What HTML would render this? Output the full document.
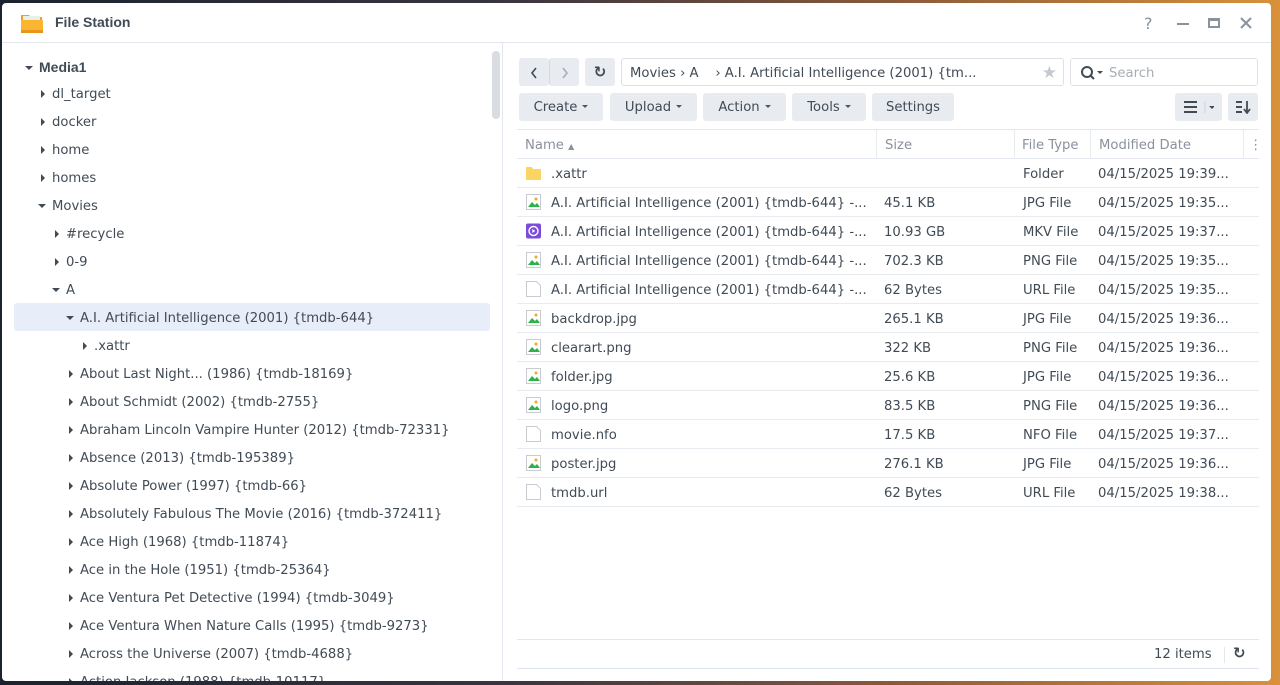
<!DOCTYPE html>
<html><head><meta charset="utf-8"><style>
*{box-sizing:border-box;margin:0;padding:0}
body{width:1280px;height:685px;overflow:hidden;background:linear-gradient(90deg,#1b2230 0%,#3a3540 40%,#8a5a3a 70%,#d9913a 100%);font-family:"DejaVu Sans",sans-serif;font-size:13.2px;color:#414b55;position:relative}
.win{position:absolute;left:2px;top:3px;width:1269px;height:678px;background:#fff;border-radius:4px;overflow:hidden}
.title{position:absolute;left:0;top:0;width:100%;height:40px;border-bottom:1px solid #e3e6ee}
.title b{position:absolute;left:53px;top:11px;font-size:14px;color:#414b55;font-family:"Liberation Sans",sans-serif}
.ab{position:absolute}
.tree{position:absolute;left:1px;top:4px;width:499px;height:674px}
.tree .r{position:absolute;height:28px;line-height:28px;white-space:nowrap}
.tri-r{display:inline-block;width:0;height:0;border-left:4px solid #414b55;border-top:4px solid transparent;border-bottom:4px solid transparent;margin-right:7px;vertical-align:0}
.tri-d{display:inline-block;width:0;height:0;border-top:4px solid #414b55;border-left:4px solid transparent;border-right:4px solid transparent;margin-right:6px;vertical-align:2px}
.btn{position:absolute;background:#e8ecf1;border-radius:3px;height:28px;line-height:28px;text-align:center;color:#414b55}
.car{display:inline-block;border-top:3px solid #555;border-left:3px solid transparent;border-right:3px solid transparent;vertical-align:3px;margin-left:5px}
.row{position:absolute;left:515px;width:742px;height:29px;border-bottom:1px solid #e8ebf0;line-height:31px;white-space:nowrap}
.row span{position:absolute}
.ic{position:absolute;left:9px;top:6px;width:15px;height:16px}
</style></head><body>
<div class="win">
<div class="title">
<svg class="ab" style="left:18px;top:8px" width="24" height="24" viewBox="0 0 24 24"><path d="M1 4h8l2 2h11v15H1z" fill="#f0a020"/><rect x="3" y="5" width="17" height="6" fill="#e8f0e8"/><rect x="1" y="9" width="22" height="13" rx="1" fill="#fbb531"/><rect x="1" y="19" width="22" height="3" fill="#e8951c"/></svg>
<b>File Station</b>
<span class="ab" style="left:1142px;top:11px;font-size:16px;color:#8a929c">?</span>
<div class="ab" style="left:1175px;top:20px;width:12px;height:2px;background:#8a929c"></div>
<div class="ab" style="left:1206px;top:15px;width:12px;height:10px;border:2px solid #8a929c;border-top-width:3px"></div>
<svg class="ab" style="left:1238px;top:14px" width="12" height="12"><path d="M1 1L11 11M11 1L1 11" stroke="#8a929c" stroke-width="2"/></svg>
</div>
<div class="ab" style="left:500px;top:40px;width:1px;height:640px;background:#e3e6ee"></div>
<div class="ab" style="left:490px;top:48px;width:8px;height:68px;background:#d9dce0;border-radius:4px"></div>
<div class="ab" style="left:12px;top:300px;width:476px;height:28px;background:#e7eef9;border-radius:3px"></div>
<div class="tree">
<div class="r" style="left:22px;top:46px"><i class="tri-d"></i><b style="font-family:'Liberation Sans',sans-serif;font-size:14px">Media1</b></div>
<div class="r" style="left:38px;top:74px"><i class="tri-r"></i>dl_target</div>
<div class="r" style="left:38px;top:102px"><i class="tri-r"></i>docker</div>
<div class="r" style="left:38px;top:130px"><i class="tri-r"></i>home</div>
<div class="r" style="left:38px;top:158px"><i class="tri-r"></i>homes</div>
<div class="r" style="left:35px;top:186px"><i class="tri-d"></i>Movies</div>
<div class="r" style="left:52px;top:214px"><i class="tri-r"></i>#recycle</div>
<div class="r" style="left:52px;top:242px"><i class="tri-r"></i>0-9</div>
<div class="r" style="left:49px;top:270px"><i class="tri-d"></i>A</div>
<div class="r" style="left:63px;top:298px"><i class="tri-d"></i>A.I. Artificial Intelligence (2001) {tmdb-644}</div>
<div class="r" style="left:80px;top:326px"><i class="tri-r"></i>.xattr</div>
<div class="r" style="left:66px;top:354px"><i class="tri-r"></i>About Last Night... (1986) {tmdb-18169}</div>
<div class="r" style="left:66px;top:382px"><i class="tri-r"></i>About Schmidt (2002) {tmdb-2755}</div>
<div class="r" style="left:66px;top:410px"><i class="tri-r"></i>Abraham Lincoln Vampire Hunter (2012) {tmdb-72331}</div>
<div class="r" style="left:66px;top:438px"><i class="tri-r"></i>Absence (2013) {tmdb-195389}</div>
<div class="r" style="left:66px;top:466px"><i class="tri-r"></i>Absolute Power (1997) {tmdb-66}</div>
<div class="r" style="left:66px;top:494px"><i class="tri-r"></i>Absolutely Fabulous The Movie (2016) {tmdb-372411}</div>
<div class="r" style="left:66px;top:522px"><i class="tri-r"></i>Ace High (1968) {tmdb-11874}</div>
<div class="r" style="left:66px;top:550px"><i class="tri-r"></i>Ace in the Hole (1951) {tmdb-25364}</div>
<div class="r" style="left:66px;top:578px"><i class="tri-r"></i>Ace Ventura Pet Detective (1994) {tmdb-3049}</div>
<div class="r" style="left:66px;top:606px"><i class="tri-r"></i>Ace Ventura When Nature Calls (1995) {tmdb-9273}</div>
<div class="r" style="left:66px;top:634px"><i class="tri-r"></i>Across the Universe (2007) {tmdb-4688}</div>
<div class="r" style="left:66px;top:662px"><i class="tri-r"></i>Action Jackson (1988) {tmdb-10117}</div>
</div>

<div class="btn" style="left:517px;top:55px;width:30px"><svg class="ab" style="left:11px;top:9px" width="8" height="12"><path d="M6 1L2 6l4 5" stroke="#414b55" stroke-width="1.6" fill="none"/></svg></div>
<div class="btn" style="left:547px;top:55px;width:30px;border-left:1px solid #d5dae0"><svg class="ab" style="left:11px;top:9px" width="8" height="12"><path d="M2 1l4 5-4 5" stroke="#a8aeb6" stroke-width="1.6" fill="none"/></svg></div>
<div class="btn" style="left:583px;top:55px;width:30px;font-size:15px;font-weight:bold">&#8635;</div>
<div class="ab" style="left:619px;top:55px;width:443px;height:28px;border:1px solid #dde1e7;border-radius:3px;line-height:29px;padding-left:8px">Movies › A &nbsp;&nbsp;&nbsp;› A.I. Artificial Intelligence (2001) {tm...<span class="ab" style="right:6px;top:0;color:#c4c8cf;font-size:17px">★</span></div>
<div class="ab" style="left:1068px;top:55px;width:188px;height:28px;border:1px solid #dde1e7;border-radius:3px;line-height:29px;padding-left:38px;color:#a8aeb6">Search<svg class="ab" style="left:9px;top:6px" width="26" height="16"><circle cx="7" cy="7" r="5" stroke="#414b55" stroke-width="2" fill="none"/><path d="M10.5 10.5L14 14" stroke="#414b55" stroke-width="2"/><path d="M17 6h6l-3 3z" fill="#414b55"/></svg></div>

<div class="btn" style="left:517px;top:90px;width:84px;line-height:30px">Create<i class="car"></i></div>
<div class="btn" style="left:608px;top:90px;width:87px;line-height:30px">Upload<i class="car"></i></div>
<div class="btn" style="left:701px;top:90px;width:83px;line-height:30px">Action<i class="car"></i></div>
<div class="btn" style="left:790px;top:90px;width:74px;line-height:30px">Tools<i class="car"></i></div>
<div class="btn" style="left:870px;top:90px;width:82px;line-height:30px">Settings</div>
<div class="btn" style="left:1173px;top:90px;width:47px"><svg class="ab" style="left:9px;top:8px" width="30" height="12"><path d="M0 1h13M0 6h13M0 11h13" stroke="#414b55" stroke-width="2"/><path d="M21 0v12" stroke="#d0d5db"/><path d="M25 5h6l-3 3z" fill="#414b55"/></svg></div>
<div class="btn" style="left:1226px;top:90px;width:30px"><svg class="ab" style="left:8px;top:8px" width="15" height="13"><path d="M0 1h6M0 6h6M0 11h6" stroke="#414b55" stroke-width="2"/><path d="M11 0v11M8 8l3 4 3-4" stroke="#414b55" stroke-width="1.8" fill="none"/></svg></div>

<div class="ab" style="left:515px;top:126px;width:742px;height:30px;border-top:1px solid #e3e6ee;border-bottom:1px solid #e3e6ee;color:#8a929c;line-height:31px">
<span class="ab" style="left:8px">Name <small style="font-size:8px">▲</small></span>
<span class="ab" style="left:359px;top:0;height:29px;border-left:1px solid #e8ebf0;padding-left:8px">Size</span>
<span class="ab" style="left:497px;top:0;height:29px;border-left:1px solid #e8ebf0;padding-left:7px">File Type</span>
<span class="ab" style="left:573px;top:0;height:29px;border-left:1px solid #e8ebf0;padding-left:8px">Modified Date</span>
<span class="ab" style="left:726px;top:0;height:29px;border-left:1px solid #e8ebf0;padding-left:5px">⋮</span>
</div>

<div class="row" style="top:156px"><svg class="ic" viewBox="0 0 15 16"><path d="M0 2h6l1 2h8v11H0z" fill="#fcd462"/></svg><span style="left:34px">.xattr</span><span style="left:506px">Folder</span><span style="left:581px">04/15/2025 19:39...</span></div>
<div class="row" style="top:185px"><svg class="ic" viewBox="0 0 15 16"><rect x=".5" y=".5" width="14" height="15" fill="#fff" stroke="#c8ccd2"/><circle cx="10" cy="5" r="1.5" fill="#f5a623"/><path d="M2 13l4-5 3 3 2-2 3 4z" fill="#2eb24a"/></svg><span style="left:34px">A.I. Artificial Intelligence (2001) {tmdb-644} -...</span><span style="left:367px">45.1 KB</span><span style="left:506px">JPG File</span><span style="left:581px">04/15/2025 19:35...</span></div>
<div class="row" style="top:214px"><svg class="ic" viewBox="0 0 15 16"><rect x="0" y=".5" width="15" height="15" rx="2" fill="#7b4bdc"/><circle cx="7.5" cy="8" r="4.5" fill="none" stroke="#fff" stroke-width="1.4"/><path d="M6.3 6v4l3-2z" fill="#fff"/></svg><span style="left:34px">A.I. Artificial Intelligence (2001) {tmdb-644} -...</span><span style="left:367px">10.93 GB</span><span style="left:506px">MKV File</span><span style="left:581px">04/15/2025 19:37...</span></div>
<div class="row" style="top:243px"><svg class="ic" viewBox="0 0 15 16"><rect x=".5" y=".5" width="14" height="15" fill="#fff" stroke="#c8ccd2"/><circle cx="10" cy="5" r="1.5" fill="#f5a623"/><path d="M2 13l4-5 3 3 2-2 3 4z" fill="#2eb24a"/></svg><span style="left:34px">A.I. Artificial Intelligence (2001) {tmdb-644} -...</span><span style="left:367px">702.3 KB</span><span style="left:506px">PNG File</span><span style="left:581px">04/15/2025 19:35...</span></div>
<div class="row" style="top:272px"><svg class="ic" viewBox="0 0 15 16"><path d="M.5.5h10l4 4v11H.5z" fill="#fff" stroke="#c8ccd2"/></svg><span style="left:34px">A.I. Artificial Intelligence (2001) {tmdb-644} -...</span><span style="left:367px">62 Bytes</span><span style="left:506px">URL File</span><span style="left:581px">04/15/2025 19:35...</span></div>
<div class="row" style="top:301px"><svg class="ic" viewBox="0 0 15 16"><rect x=".5" y=".5" width="14" height="15" fill="#fff" stroke="#c8ccd2"/><circle cx="10" cy="5" r="1.5" fill="#f5a623"/><path d="M2 13l4-5 3 3 2-2 3 4z" fill="#2eb24a"/></svg><span style="left:34px">backdrop.jpg</span><span style="left:367px">265.1 KB</span><span style="left:506px">JPG File</span><span style="left:581px">04/15/2025 19:36...</span></div>
<div class="row" style="top:330px"><svg class="ic" viewBox="0 0 15 16"><rect x=".5" y=".5" width="14" height="15" fill="#fff" stroke="#c8ccd2"/><circle cx="10" cy="5" r="1.5" fill="#f5a623"/><path d="M2 13l4-5 3 3 2-2 3 4z" fill="#2eb24a"/></svg><span style="left:34px">clearart.png</span><span style="left:367px">322 KB</span><span style="left:506px">PNG File</span><span style="left:581px">04/15/2025 19:36...</span></div>
<div class="row" style="top:359px"><svg class="ic" viewBox="0 0 15 16"><rect x=".5" y=".5" width="14" height="15" fill="#fff" stroke="#c8ccd2"/><circle cx="10" cy="5" r="1.5" fill="#f5a623"/><path d="M2 13l4-5 3 3 2-2 3 4z" fill="#2eb24a"/></svg><span style="left:34px">folder.jpg</span><span style="left:367px">25.6 KB</span><span style="left:506px">JPG File</span><span style="left:581px">04/15/2025 19:36...</span></div>
<div class="row" style="top:388px"><svg class="ic" viewBox="0 0 15 16"><rect x=".5" y=".5" width="14" height="15" fill="#fff" stroke="#c8ccd2"/><circle cx="10" cy="5" r="1.5" fill="#f5a623"/><path d="M2 13l4-5 3 3 2-2 3 4z" fill="#2eb24a"/></svg><span style="left:34px">logo.png</span><span style="left:367px">83.5 KB</span><span style="left:506px">PNG File</span><span style="left:581px">04/15/2025 19:36...</span></div>
<div class="row" style="top:417px"><svg class="ic" viewBox="0 0 15 16"><path d="M.5.5h10l4 4v11H.5z" fill="#fff" stroke="#c8ccd2"/></svg><span style="left:34px">movie.nfo</span><span style="left:367px">17.5 KB</span><span style="left:506px">NFO File</span><span style="left:581px">04/15/2025 19:37...</span></div>
<div class="row" style="top:446px"><svg class="ic" viewBox="0 0 15 16"><rect x=".5" y=".5" width="14" height="15" fill="#fff" stroke="#c8ccd2"/><circle cx="10" cy="5" r="1.5" fill="#f5a623"/><path d="M2 13l4-5 3 3 2-2 3 4z" fill="#2eb24a"/></svg><span style="left:34px">poster.jpg</span><span style="left:367px">276.1 KB</span><span style="left:506px">JPG File</span><span style="left:581px">04/15/2025 19:36...</span></div>
<div class="row" style="top:475px"><svg class="ic" viewBox="0 0 15 16"><path d="M.5.5h10l4 4v11H.5z" fill="#fff" stroke="#c8ccd2"/></svg><span style="left:34px">tmdb.url</span><span style="left:367px">62 Bytes</span><span style="left:506px">URL File</span><span style="left:581px">04/15/2025 19:38...</span></div>

<div class="ab" style="left:515px;top:636px;width:742px;height:30px;border-top:1px solid #e3e6ee;border-bottom:1px solid #dde3ec"></div>
<span class="ab" style="left:1152px;top:644px">12 items</span>
<div class="ab" style="left:1222px;top:644px;width:1px;height:16px;background:#e3e6ee"></div>
<span class="ab" style="left:1231px;top:641px;font-size:15px;font-weight:bold">&#8635;</span>
</div>
</body></html>
